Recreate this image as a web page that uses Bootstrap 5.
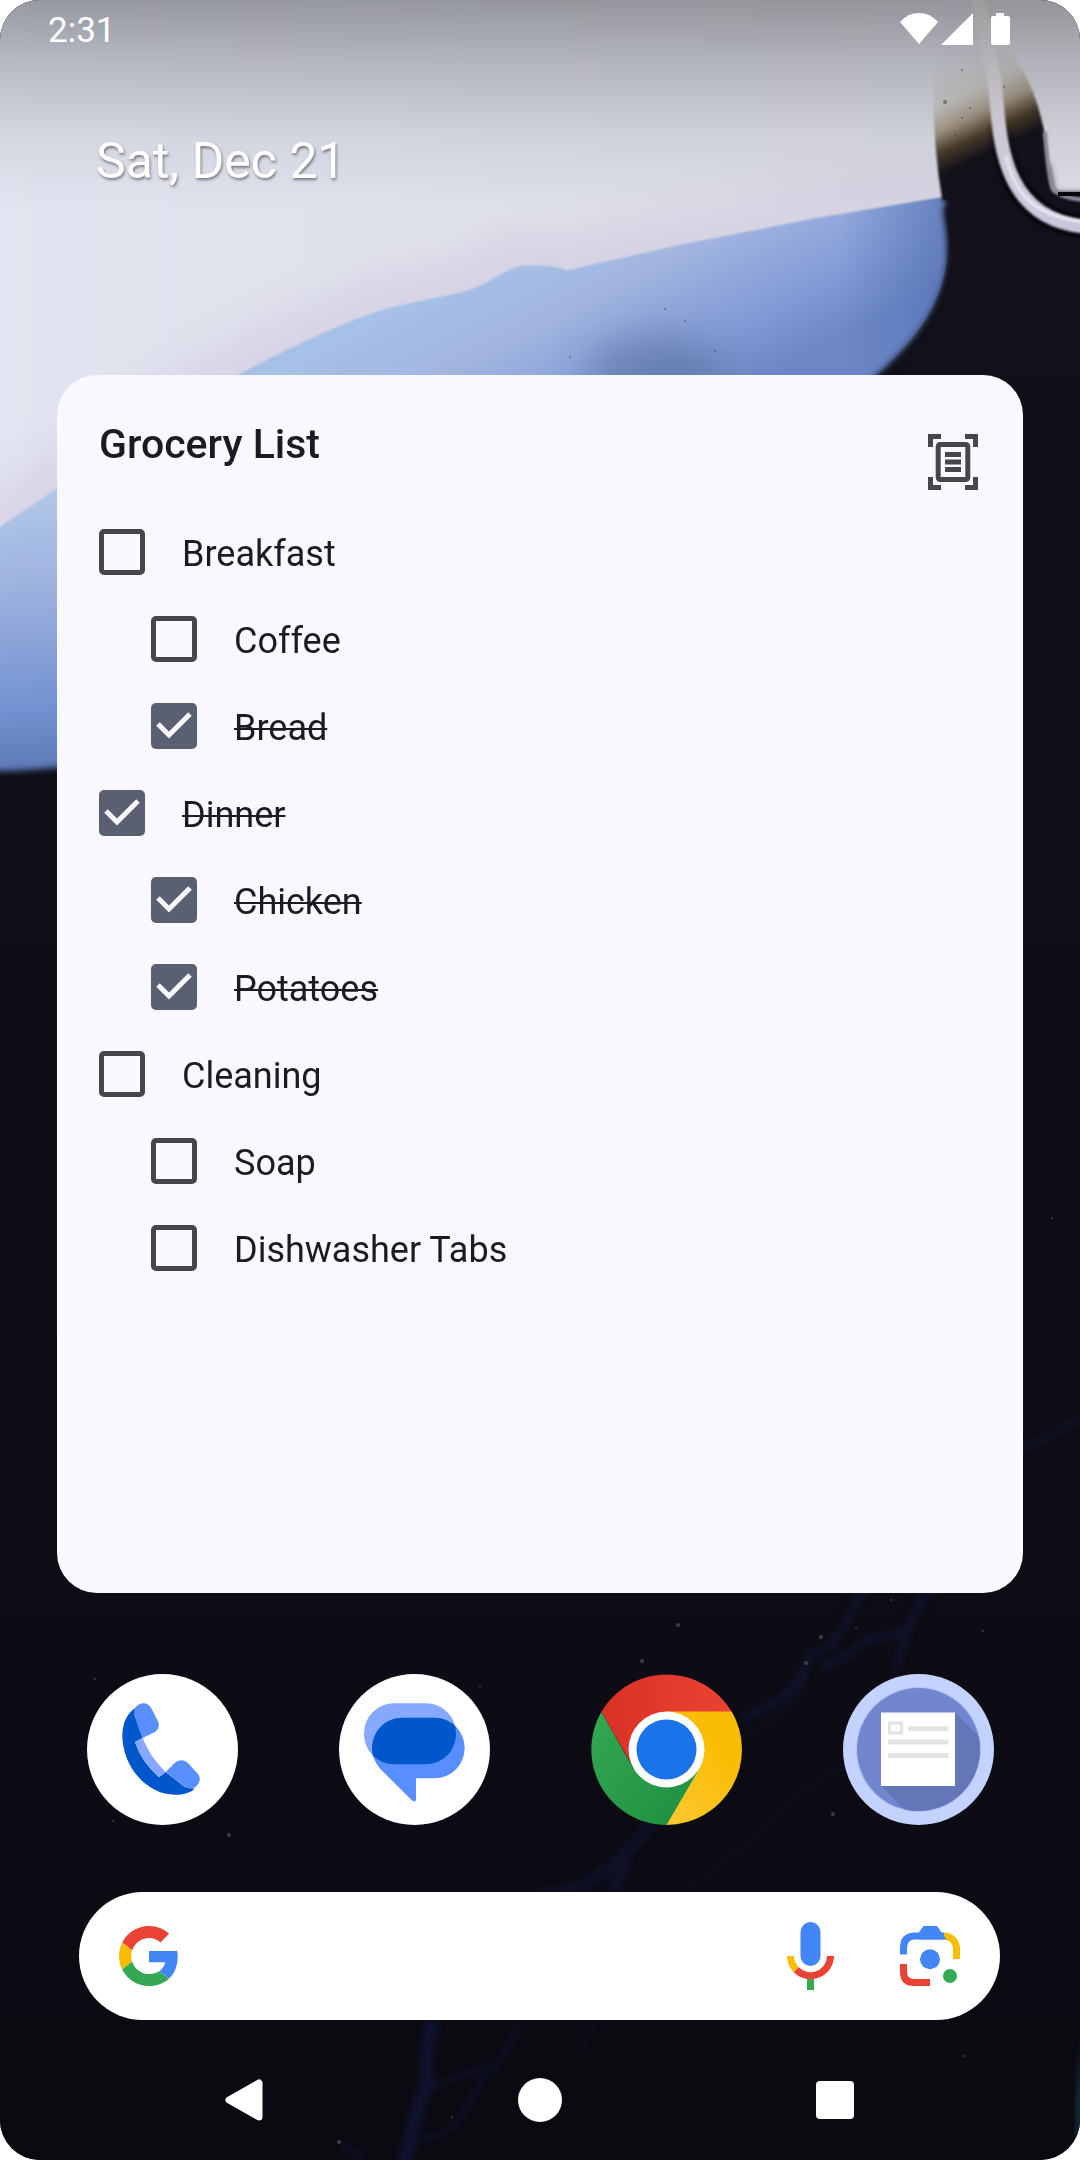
<!DOCTYPE html>
<html lang="en">
<head>
<meta charset="utf-8">
<meta name="viewport" content="width=device-width, initial-scale=1">
<title>Home screen</title>
<link href="https://cdn.jsdelivr.net/npm/bootstrap@5.3.0/dist/css/bootstrap.min.css" rel="stylesheet">
<style>
  body { font-family: Roboto, "Noto Sans", sans-serif; background: #fff; color: #1c1b1f; }
  .screen { min-height: 100vh; border-radius: 40px; background: #0d0c14; isolation: isolate; }
  .wallpaper { inset: 0; z-index: -1; }
  .wallpaper filter { color-interpolation-filters: sRGB; }
  .status-bar { height: 58px; padding: 0 70px 0 48px; font-size: 35px; line-height: 40px; }
  .status-icons { gap: 3px; }
  .status-icons .battery { margin-left: 15px; }
  .date-line { margin: 73px 96px 0; font-size: 50px; line-height: 60px; text-shadow: 1px 2px 3px rgba(0,0,0,.45); }
  .widget { margin: 184px 57px 0; padding: 45px 45px 45px 42px; border-radius: 40px; background: #f9f8ff; }
  .widget-title { font-size: 41px; line-height: 48px; font-weight: 500; }
  .scan-btn { margin: 14px 0 18px; color: #49454d; line-height: 0; }
  .item { height: 87px; }
  .item.nested { padding-left: 52px; }
  .item label { padding-left: 37px; padding-top: 5px; font-size: 36px; line-height: 40px; }
  .tick { appearance: none; width: 46px; height: 46px; margin: 0; border: 5px solid #49454d; border-radius: 5px; background: transparent; }
  .tick:checked { border: 0; background: #5a5f72 url("data:image/svg+xml,%3Csvg xmlns='http://www.w3.org/2000/svg' viewBox='0 0 46 46'%3E%3Cpath d='M7 21 18 32 39 11' fill='none' stroke='%23f9f8ff' stroke-width='5'/%3E%3C/svg%3E"); }
  .tick:checked + label { text-decoration: line-through; text-decoration-thickness: 2px; }
  .dock { margin: 81px 86px 0 87px; line-height: 0; }
  .search-pill { margin: 67px 80px 0 79px; height: 128px; padding: 0 40px; border-radius: 64px; background: #fff; }
  .search-pill input { font-size: 36px; min-width: 0; }
  .search-tools { gap: 66px; line-height: 0; }
  .nav-keys { height: 120px; margin-top: 20px; padding: 0 223px; }
  .nav-keys button { line-height: 0; }
  .bare { border: 0; background: none; padding: 0; }
</style>
<script src="https://cdn.jsdelivr.net/npm/bootstrap@5.3.0/dist/js/bootstrap.bundle.min.js"></script>
</head>
<body>
<div class="screen position-relative overflow-hidden d-flex flex-column">

  <svg class="wallpaper position-absolute w-100 h-100" viewBox="0 0 1080 2160" preserveAspectRatio="xMidYMid slice" aria-hidden="true">
    <defs>
      <linearGradient id="night" x1="0" y1="0" x2="0" y2="1"><stop offset="0" stop-color="#12111b"/><stop offset=".7" stop-color="#0e0d16"/><stop offset="1" stop-color="#0b0a11"/></linearGradient>
      <linearGradient id="scrim" x1="0" y1="0" x2="0" y2="1"><stop offset="0" stop-opacity=".33"/><stop offset=".3" stop-opacity=".19"/><stop offset=".65" stop-opacity=".06"/><stop offset="1" stop-opacity="0"/></linearGradient>
      <linearGradient id="mist" gradientUnits="userSpaceOnUse" x1="0" y1="200" x2="1080" y2="200"><stop offset="0" stop-color="#e2e5f1"/><stop offset=".5" stop-color="#dee0ea"/><stop offset="1" stop-color="#dcdde6"/></linearGradient>
      <linearGradient id="wave" gradientUnits="userSpaceOnUse" x1="530" y1="235" x2="640" y2="445"><stop offset="0" stop-color="#a6c1e7"/><stop offset=".35" stop-color="#a2b5e0"/><stop offset=".75" stop-color="#819bd6"/><stop offset="1" stop-color="#6c86c6"/></linearGradient>
      <linearGradient id="waveSide" gradientUnits="userSpaceOnUse" x1="840" y1="0" x2="955" y2="0"><stop offset="0" stop-color="#5c79b8" stop-opacity="0"/><stop offset="1" stop-color="#5470b0" stop-opacity=".7"/></linearGradient>
      <linearGradient id="waveLeft" gradientUnits="userSpaceOnUse" x1="0" y1="500" x2="20" y2="775"><stop offset="0" stop-color="#b0c6e8"/><stop offset=".3" stop-color="#9fb3df"/><stop offset=".75" stop-color="#7593d2"/><stop offset="1" stop-color="#5c78b6"/></linearGradient>
      <linearGradient id="smoke" gradientUnits="userSpaceOnUse" x1="955" y1="55" x2="1010" y2="175"><stop offset="0" stop-color="#d4d4d2" stop-opacity="0"/><stop offset=".3" stop-color="#cbc9c4" stop-opacity=".8"/><stop offset=".48" stop-color="#a69a88"/><stop offset=".63" stop-color="#4a3c2b"/><stop offset=".78" stop-color="#14131b"/></linearGradient>
      <linearGradient id="shade" gradientUnits="userSpaceOnUse" x1="0" y1="120" x2="0" y2="190"><stop offset="0" stop-color="#07070b" stop-opacity="0"/><stop offset="1" stop-color="#07070b"/></linearGradient>
      <linearGradient id="tube" gradientUnits="userSpaceOnUse" x1="0" y1="0" x2="0" y2="230"><stop offset="0" stop-color="#e8e6e6"/><stop offset=".5" stop-color="#dedae4"/><stop offset="1" stop-color="#c6c5dc"/></linearGradient>
      <clipPath id="bluePart"><path d="M0 190H941Q948 225 948 250C944 300 919 337 876 375H0Z"/></clipPath>
      <clipPath id="mistPart"><path d="M0 0H941V197L815 218 678 245 567 270Q555 265 530 265C505 265 490 285 461 292L396 306Q345 318 237 375 145 415 57 488L0 528Z"/></clipPath>
      <filter id="b1" x="-20%" y="-20%" width="140%" height="140%"><feGaussianBlur stdDeviation="1"/></filter>
      <filter id="b3" x="-20%" y="-20%" width="140%" height="140%"><feGaussianBlur stdDeviation="3"/></filter>
      <filter id="b20" x="-50%" y="-50%" width="200%" height="200%"><feGaussianBlur stdDeviation="20"/></filter>
    </defs>
    <rect width="1080" height="2160" fill="url(#night)"/>
    <path d="M876 375C919 337 944 300 948 250Q948 225 941 180H100V600H600Z" fill="url(#wave)" filter="url(#b3)"/>
    <rect x="780" y="180" width="180" height="200" fill="url(#waveSide)" clip-path="url(#bluePart)"/>
    <path d="M-40 400H140V755Q60 772-40 772Z" fill="url(#waveLeft)" filter="url(#b3)"/>
    <path d="M-20-20H1100V193H1052L1000 170 941 197 815 218 678 245 567 270Q555 265 530 265C505 265 490 285 461 292L396 306Q345 318 237 375 145 415 57 488L-20 540Z" fill="url(#mist)" filter="url(#b1)"/>
    <g clip-path="url(#mistPart)"><path d="M960 193L815 218 678 245 567 270Q555 265 530 265C505 265 490 285 461 292L396 306Q345 318 237 375 145 415 57 488L-20 540" fill="none" stroke="#cfc6de" stroke-width="60" opacity=".55" filter="url(#b20)"/></g>
    <path d="M943 205Q930 130 934 45H1000Q1030 65 1044 130L1052 200H943Z" fill="url(#smoke)" filter="url(#b1)"/>
    <path d="M943 210L962 192 1000 165H1049L1054 193H1090V380H892Q945 325 948 265 949 235 943 210Z" fill="#12111b" filter="url(#b3)"/>
    <path d="M1045 132Q1048 172 1052 187 1058 199 1090 200" fill="none" stroke="#8f919e" stroke-width="4" filter="url(#b1)"/>
    <path d="M1058 194H1090" stroke="#07070b" stroke-width="4"/>
    <g fill="none">
      <path d="M995 85C1000 130 997 222 1090 227" stroke="url(#shade)" stroke-width="23" filter="url(#b1)"/>
      <path d="M977-5L995 85C1000 130 997 222 1090 227" stroke="url(#tube)" stroke-width="14" filter="url(#b1)"/>
      <path d="M1006 155C1014 195 1035 216 1085 222" stroke="#fff" stroke-width="3" opacity=".6" filter="url(#b1)"/>
    </g>
    <ellipse cx="655" cy="375" rx="70" ry="40" fill="#4f6690" opacity=".5" filter="url(#b20)"/>
    <g fill="#3c3a3c" opacity=".5"><circle cx="945" cy="102" r="2"/><circle cx="962" cy="70" r="1"/><circle cx="946" cy="151" r="1"/><circle cx="1004" cy="87" r="1"/><circle cx="944" cy="175" r="1"/><circle cx="962" cy="118" r="1"/><circle cx="955" cy="135" r="1"/><circle cx="970" cy="108" r="1"/><circle cx="951" cy="160" r="1"/><circle cx="715" cy="351" r="1"/><circle cx="685" cy="321" r="1"/><circle cx="665" cy="309" r="1"/><circle cx="570" cy="357" r="1"/></g>
    <g fill="none" stroke="#17215c" opacity=".7" filter="url(#b3)">
      <path d="M870 1585Q855 1600 845 1625L830 1645 810 1655Q800 1690 770 1705L740 1720" stroke-width="8" opacity=".45"/>
      <path d="M940 1585Q920 1595 910 1625L895 1670M908 1632Q880 1638 865 1640 840 1665 822 1665" stroke-width="9" opacity=".4"/>
      <path d="M808 1675Q790 1715 742 1738" stroke-width="4" opacity=".35"/>
      <path d="M655 1820Q625 1855 600 1875T540 1892M628 1860L610 1895" stroke-width="12" opacity=".4"/>
      <path d="M845 1765Q800 1785 765 1830L720 1865 680 1895" stroke-width="3" opacity=".5"/>
      <path d="M1080 1420Q1040 1440 1022 1450" stroke-width="8" opacity=".35"/>
      <path d="M433 2018Q425 2050 427 2080L412 2130 402 2170" stroke-width="14" opacity=".55"/>
      <path d="M430 2088L470 2072 495 2068 520 2025M485 2075Q460 2120 450 2130L415 2142M340 2142L365 2160" stroke-width="6" opacity=".4"/>
      <path d="M595 2020L580 2050" stroke-width="4" opacity=".4"/>
    </g>
    <g fill="#8b8b88" opacity=".4"><circle cx="642" cy="1661" r="2"/><circle cx="678" cy="1625" r="2"/><circle cx="821" cy="1637" r="2"/><circle cx="806" cy="1663" r="2"/><circle cx="856" cy="1628" r="1"/><circle cx="983" cy="1631" r="1"/><circle cx="891" cy="1600" r="1"/><circle cx="833" cy="1814" r="2"/><circle cx="229" cy="1835" r="2"/><circle cx="339" cy="2142" r="2"/><circle cx="452" cy="2117" r="1"/><circle cx="964" cy="2056" r="1"/><circle cx="95" cy="1679" r="1"/><circle cx="480" cy="1686" r="1"/><circle cx="1052" cy="1218" r="1"/><circle cx="113" cy="1821" r="1"/></g>
    <path d="M1084 2040Q1074 2080 1076 2160H1084Z" fill="#12303f" filter="url(#b3)"/>
    <rect width="1080" height="210" fill="url(#scrim)"/>
  </svg>

  <header class="status-bar d-flex justify-content-between align-items-center text-white">
    <time class="pt-1">2:31</time>
    <div class="status-icons d-flex">
      <svg width="38" height="32" viewBox="0 0 38 32" fill="#fff" role="img" aria-label="Wi-Fi"><path d="M0 9Q8 0 19 0T38 9L19 31Z"/></svg>
      <svg width="32" height="32" viewBox="0 0 32 32" fill="#fff" role="img" aria-label="Mobile signal"><path d="M32 0V32H0Z"/></svg>
      <svg class="battery" width="19" height="32" viewBox="0 0 19 32" fill="#fff" role="img" aria-label="Battery"><path d="M5 0H13V3H17Q19 3 19 5V30Q19 32 17 32H2Q0 32 0 30V5Q0 3 2 3H5Z"/></svg>
    </div>
  </header>

  <div class="date-line text-white">Sat, Dec 21</div>

  <main class="widget flex-grow-1">
    <div class="d-flex justify-content-between align-items-start">
      <h1 class="widget-title m-0">Grocery List</h1>
      <button class="bare scan-btn" type="button" aria-label="Scan list">
        <svg width="50" height="56" viewBox="0 0 50 56" fill="none" stroke="currentColor" stroke-width="5"><path d="M2.500 13V2.500H13M37 2.500H47.500V13M47.500 43V53.500H37M13 53.500H2.500V43"/><rect x="10.200" y="10.500" width="29.600" height="35" rx="2"/><path d="M17 20.500H33M17 28H33M17 35.500H33"/></svg>
      </button>
    </div>
    <ul class="list-unstyled m-0">
      <li class="item d-flex align-items-center"><input class="tick" type="checkbox" id="i1"><label for="i1">Breakfast</label></li>
      <li class="item nested d-flex align-items-center"><input class="tick" type="checkbox" id="i2"><label for="i2">Coffee</label></li>
      <li class="item nested d-flex align-items-center"><input class="tick" type="checkbox" id="i3" checked><label for="i3">Bread</label></li>
      <li class="item d-flex align-items-center"><input class="tick" type="checkbox" id="i4" checked><label for="i4">Dinner</label></li>
      <li class="item nested d-flex align-items-center"><input class="tick" type="checkbox" id="i5" checked><label for="i5">Chicken</label></li>
      <li class="item nested d-flex align-items-center"><input class="tick" type="checkbox" id="i6" checked><label for="i6">Potatoes</label></li>
      <li class="item d-flex align-items-center"><input class="tick" type="checkbox" id="i7"><label for="i7">Cleaning</label></li>
      <li class="item nested d-flex align-items-center"><input class="tick" type="checkbox" id="i8"><label for="i8">Soap</label></li>
      <li class="item nested d-flex align-items-center"><input class="tick" type="checkbox" id="i9"><label for="i9">Dishwasher Tabs</label></li>
    </ul>
  </main>

  <nav class="dock d-flex justify-content-between" aria-label="Favourite apps">
    <a href="#" aria-label="Phone">
      <svg width="151" height="151" viewBox="0 0 453 453"><circle cx="226.500" cy="226.500" r="226.500" fill="#fff"/>
        <g transform="translate(-81 -101)">
          <path d="M225 203C195 225 187 257 187 290 190 380 260 463 345 463 370 463 390 457 404 445L375 440 317 395 297 411Q245 365 225 305L248 293 224 225Z" fill="#0057cc"/>
          <path d="M225 305L248 293Q270 350 317 395L297 411Q245 365 225 305Z" fill="#86a9ff"/>
          <path d="M223 217C220 203 235 189 250 189 262 189 269 195 274 204L295 245C299 256 296 267 286 274L248 293Q230 255 223 217Z" fill="#598eff"/>
          <path d="M317 395L344 368C356 357 372 357 384 368L412 399C422 410 421 422 414 432 404 447 388 447 375 439Z" fill="#598eff"/>
        </g></svg>
    </a>
    <a href="#" aria-label="Messages">
      <svg width="151" height="151" viewBox="0 0 453 453"><circle cx="226.500" cy="226.500" r="226.500" fill="#fff"/>
        <defs><clipPath id="bubble"><rect x="912" y="189" width="276" height="183" rx="90"/></clipPath>
        <path id="speech" d="M1026 232H1124A90 91 0 0 1 1124 414H1068V478Q1067 487 1057 481L962 387Q936 358 936 323A90 91 0 0 1 1026 232Z"/></defs>
        <g transform="translate(-837 -101)">
          <rect x="912" y="189" width="276" height="183" rx="90" fill="#86a9ff"/>
          <use href="#speech" fill="#598eff"/>
          <g clip-path="url(#bubble)"><use href="#speech" fill="#0057cc"/></g>
        </g></svg>
    </a>
    <a href="#" aria-label="Chrome">
      <svg width="151" height="151" viewBox="0 0 151 151">
        <defs>
          <linearGradient id="cr"><stop offset="0" stop-color="#d93025"/><stop offset="1" stop-color="#ea4335"/></linearGradient>
          <linearGradient id="cy" x1="1" y1="0" x2="0" y2="1"><stop offset=".3" stop-color="#fbbc04"/><stop offset="1" stop-color="#fcc934"/></linearGradient>
          <linearGradient id="cg" x1="0" y1="0" x2="1" y2="1"><stop offset="0" stop-color="#34a853"/><stop offset="1" stop-color="#1e8e3e"/></linearGradient>
        </defs>
        <path d="M10.300 38A75.500 75.500 0 0 1 140.700 38H76L43 94.500Z" fill="url(#cr)"/>
        <path d="M75 37.500H140.700A75.500 75.500 0 0 1 75.500 151L75 94Z" fill="url(#cy)"/>
        <path d="M10.300 38L42.500 94.500H108.500L75.500 151A75.500 75.500 0 0 1 10.300 38Z" fill="url(#cg)"/>
        <circle cx="75.500" cy="75.500" r="38" fill="#fff"/><circle cx="75.500" cy="75.500" r="30" fill="#1a73e8"/></svg>
    </a>
    <a href="#" aria-label="Notes">
      <svg width="151" height="151" viewBox="0 0 151 151">
        <defs><clipPath id="disc"><circle cx="75.500" cy="75.500" r="61.500"/></clipPath></defs>
        <circle cx="75.500" cy="75.500" r="75.500" fill="#c4d2ff"/><circle cx="75.500" cy="75.500" r="62.500" fill="#b3c1f0"/><circle cx="75.500" cy="75.500" r="61.500" fill="#7286d0"/>
        <path d="M112 38.500L212 138.500V212H138L38 112Z" fill="#6576b8" clip-path="url(#disc)"/>
        <path d="M38 38.500H112V112H38Z" fill="#fff"/>
        <path d="M46.500 49H58.500V59H46.500Z" fill="none" stroke="#e4e4e4" stroke-width="3.300"/>
        <path d="M65 54.700H105.500M45 68H105.500M45 81.500H105.500" stroke="#e4e4e4" stroke-width="5"/></svg>
    </a>
  </nav>

  <form class="search-pill d-flex align-items-center" role="search">
    <svg width="60" height="60" viewBox="0 0 48 48" aria-hidden="true"><path fill="#ea4335" d="M24 9.500c3.540 0 6.710 1.220 9.210 3.600l6.850-6.850C35.900 2.380 30.470 0 24 0 14.620 0 6.510 5.380 2.560 13.220l7.980 6.190C12.430 13.720 17.740 9.500 24 9.500z"/><path fill="#4285f4" d="M46.980 24.550c0-1.570-.15-3.090-.38-4.550H24v9.020h12.940c-.58 2.960-2.260 5.480-4.780 7.180l7.730 6c4.510-4.180 7.090-10.360 7.090-17.650z"/><path fill="#fbbc05" d="M10.530 28.590c-.48-1.450-.76-2.990-.76-4.590s.27-3.140.76-4.590l-7.980-6.190C.92 16.460 0 20.120 0 24c0 3.880.92 7.540 2.560 10.780l7.970-6.190z"/><path fill="#34a853" d="M24 48c6.480 0 11.930-2.130 15.890-5.810l-7.730-6c-2.150 1.450-4.920 2.300-8.160 2.300-6.260 0-11.570-4.220-13.470-9.910l-7.980 6.190C6.510 42.620 14.620 48 24 48z"/></svg>
    <input class="bare flex-grow-1 mx-4" type="search" aria-label="Search">
    <div class="search-tools d-flex align-items-center">
      <button class="bare" type="button" aria-label="Voice search">
        <svg width="47" height="68" viewBox="0 0 47 68" fill="none"><path d="M3.500 34A20 20 0 0 0 9.500 48" stroke="#fbbc04" stroke-width="7"/><path d="M9.300 47.800A20 20 0 0 0 43.500 34" stroke="#ea4335" stroke-width="7"/><path d="M23.500 57V68" stroke="#34a853" stroke-width="7"/><rect x="13.500" width="20" height="44" rx="10" fill="#4285f4"/></svg>
      </button>
      <button class="bare" type="button" aria-label="Search with Lens">
        <svg width="60" height="60" viewBox="0 0 60 60" fill="none"><g stroke-width="7"><path d="M44 10A12.500 12.500 0 0 1 56.500 22V33" stroke="#fbbc04"/><path d="M3.500 28.500V22Q3.500 10 15 10H44" stroke="#4285f4"/><path d="M3.500 38V46Q3.500 56.500 14 56.500H30" stroke="#ea4335"/></g><path d="M18.500 7L23.500 0H37L46.500 13.500H19Z" fill="#4285f4"/><circle cx="30" cy="33.300" r="10" fill="#4285f4"/><circle cx="50" cy="50" r="7" fill="#34a853"/></svg>
      </button>
    </div>
  </form>

  <nav class="nav-keys d-flex justify-content-between align-items-center" aria-label="System navigation">
    <button class="bare" type="button" aria-label="Back"><svg width="44" height="44" viewBox="0 0 44 44"><path d="M6 22L36 5V39Z" fill="#fff" stroke="#fff" stroke-width="7" stroke-linejoin="round"/></svg></button>
    <button class="bare" type="button" aria-label="Home"><svg width="44" height="44" viewBox="0 0 44 44"><circle cx="22" cy="22" r="22" fill="#fff"/></svg></button>
    <button class="bare" type="button" aria-label="Overview"><svg width="44" height="44" viewBox="0 0 44 44"><rect x="3" y="3" width="38" height="38" rx="4" fill="#fff"/></svg></button>
  </nav>
</div>
</body>
</html>
